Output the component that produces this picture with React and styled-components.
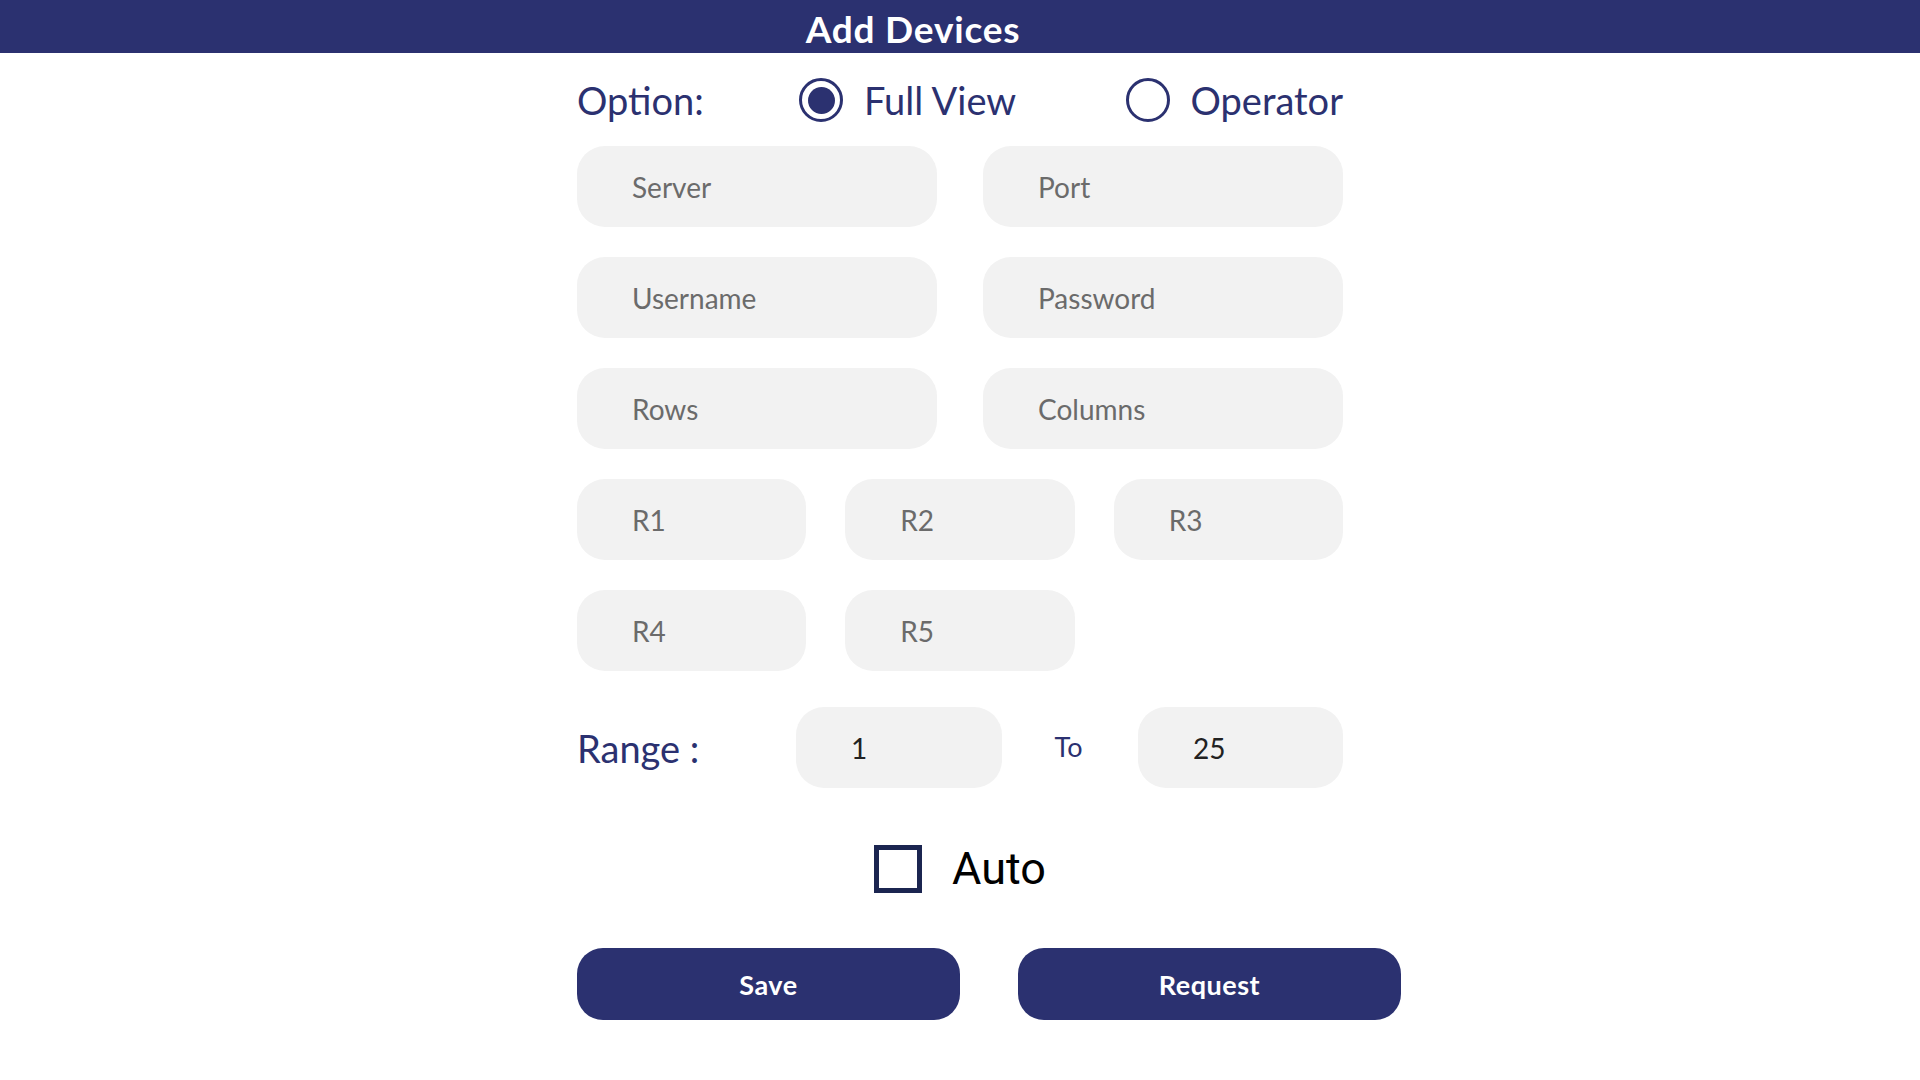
import React from 'react';
import styled, { createGlobalStyle } from 'styled-components';

const NAVY = '#2b3170';
const FIELD_BG = '#f2f2f2';

const GlobalStyle = createGlobalStyle`
  * { box-sizing: border-box; }
  body {
    margin: 0;
    background: #ffffff;
    font-family: Lato, "Noto Sans", sans-serif;
  }
`;

const Header = styled.header`
  height: 53px;
  background-color: ${NAVY};
  display: flex;
  align-items: center;
  justify-content: center;
  padding-right: 94px;
`;

const Title = styled.h1`
  margin: 0;
  padding-top: 4px;
  color: #ffffff;
  font-size: 37px;
  font-weight: 700;
  letter-spacing: 0.8px;
`;

const Form = styled.form`
  width: 766px;
  margin: 25px auto 0;
  display: flex;
  flex-direction: column;
`;

const OptionRow = styled.div`
  display: flex;
  align-items: center;
  height: 44px;
  margin-bottom: 24px;
`;

const Label = styled.span`
  color: ${NAVY};
  font-size: 38px;
  width: ${(p) => p.width || 'auto'};
  flex-shrink: 0;
`;

const RadioOption = styled.label`
  display: flex;
  align-items: center;
  gap: 21px;
  margin-left: ${(p) => (p.pushRight ? 'auto' : '0')};
  color: ${NAVY};
  font-size: 38px;
  cursor: pointer;
`;

const RadioCircle = styled.span`
  width: 44px;
  height: 44px;
  border-radius: 50%;
  border: 3px solid ${NAVY};
  display: flex;
  align-items: center;
  justify-content: center;

  &::after {
    content: '';
    width: 27px;
    height: 27px;
    border-radius: 50%;
    background: ${(p) => (p.checked ? NAVY : 'transparent')};
  }
`;

const FieldGrid = styled.div`
  display: grid;
  grid-template-columns: repeat(${(p) => p.cols}, 1fr);
  column-gap: ${(p) => p.gap}px;
  margin-bottom: ${(p) => p.below || 30}px;
`;

const Field = styled.input`
  height: 81px;
  width: 100%;
  border: none;
  outline: none;
  border-radius: 28px;
  background: ${FIELD_BG};
  padding: 0 0 0 55px;
  font-family: Lato, "Noto Sans", sans-serif;
  font-size: 28px;
  color: #222222;

  &::placeholder {
    color: #6b6b6b;
  }
`;

const RangeRow = styled.div`
  display: grid;
  grid-template-columns: 219px 206px 136px 205px;
  align-items: center;
  margin-bottom: 57px;
`;

const ToText = styled.span`
  color: ${NAVY};
  font-size: 27px;
  text-align: center;
  padding-right: 3px;
  padding-bottom: 2px;
`;

const AutoRow = styled.label`
  display: flex;
  justify-content: center;
  align-items: center;
  gap: 30px;
  height: 48px;
  margin-bottom: 55px;
  cursor: pointer;
`;

const CheckBox = styled.span`
  width: 48px;
  height: 48px;
  border: 5px solid #1b2550;
  background: ${(p) => (p.checked ? '#1b2550' : '#ffffff')};
`;

const AutoText = styled.span`
  font-family: Roboto, "Liberation Sans", sans-serif;
  font-size: 45px;
  line-height: 48px;
  color: #000000;
`;

const ButtonRow = styled.div`
  display: flex;
  gap: 58px;
  width: 825px;
`;

const ActionButton = styled.button`
  width: 383px;
  height: 72px;
  border: none;
  border-radius: 26px;
  background: ${NAVY};
  color: #ffffff;
  font-family: Lato, "Noto Sans", sans-serif;
  font-size: 27px;
  font-weight: 700;
  letter-spacing: 0.5px;
  cursor: pointer;
`;

export default function App() {
  const [view, setView] = React.useState('full');
  const [auto, setAuto] = React.useState(false);

  return (
    <>
      <GlobalStyle />
      <Header>
        <Title>Add Devices</Title>
      </Header>
      <Form onSubmit={(e) => e.preventDefault()}>
        <OptionRow>
          <Label width="222px">Option:</Label>
          <RadioOption onClick={() => setView('full')}>
            <RadioCircle checked={view === 'full'} />
            Full View
          </RadioOption>
          <RadioOption pushRight onClick={() => setView('operator')}>
            <RadioCircle checked={view === 'operator'} />
            Operator
          </RadioOption>
        </OptionRow>

        <FieldGrid cols={2} gap={46}>
          <Field placeholder="Server" />
          <Field placeholder="Port" />
        </FieldGrid>
        <FieldGrid cols={2} gap={46}>
          <Field placeholder="Username" />
          <Field placeholder="Password" type="password" />
        </FieldGrid>
        <FieldGrid cols={2} gap={46}>
          <Field placeholder="Rows" />
          <Field placeholder="Columns" />
        </FieldGrid>
        <FieldGrid cols={3} gap={39}>
          <Field placeholder="R1" />
          <Field placeholder="R2" />
          <Field placeholder="R3" />
        </FieldGrid>
        <FieldGrid cols={3} gap={39} below={36}>
          <Field placeholder="R4" />
          <Field placeholder="R5" />
        </FieldGrid>

        <RangeRow>
          <Label>Range :</Label>
          <Field defaultValue="1" />
          <ToText>To</ToText>
          <Field defaultValue="25" />
        </RangeRow>

        <AutoRow onClick={() => setAuto(!auto)}>
          <CheckBox checked={auto} />
          <AutoText>Auto</AutoText>
        </AutoRow>

        <ButtonRow>
          <ActionButton type="button">Save</ActionButton>
          <ActionButton type="button">Request</ActionButton>
        </ButtonRow>
      </Form>
    </>
  );
}
